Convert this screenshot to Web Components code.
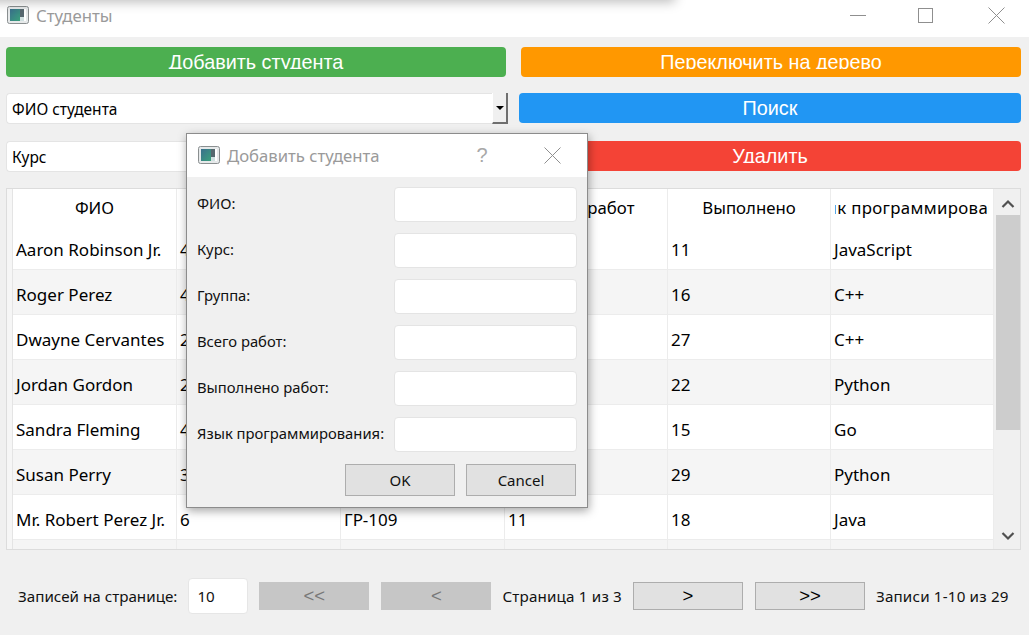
<!DOCTYPE html>
<html lang="ru">
<head>
<meta charset="utf-8">
<title>Студенты</title>
<style>
    html, body { margin: 0; padding: 0; height: 100%; overflow: hidden; }
    body { font-family: "Noto Sans", "Open Sans", sans-serif; background: #f0f0f0; }
</style>
</head>
<body>
<student-window></student-window>

<script>
const ICON = `
    <svg class="app-icon" width="22" height="18" viewBox="0 0 22 18">
        <defs>
            <linearGradient id="g" x1="0" y1="0" x2="1" y2="1">
                <stop offset="0" stop-color="#3a6f8c"/>
                <stop offset="1" stop-color="#3aa07c"/>
            </linearGradient>
        </defs>
        <rect x=".5" y=".5" width="21" height="17" rx="2" fill="#e6e9ea" stroke="#8a8f90"/>
        <rect x="3" y="3" width="10" height="12" fill="url(#g)"/>
        <rect x="13" y="3" width="4" height="8" fill="#56686f"/>
        <rect x="17" y="3" width="2" height="12" fill="#fff"/>
        <rect x="13" y="11" width="4" height="4" fill="#cfe0e0"/>
    </svg>`;

class TitleBar extends HTMLElement {
    constructor() {
        super();
        this.attachShadow({mode: "open"});
    }

    connectedCallback() {
        const dialog = this.hasAttribute("dialog");
        this.shadowRoot.innerHTML = `
            <style>
                :host {
                    display: flex;
                    align-items: center;
                    box-sizing: border-box;
                    background: #fff;
                    color: #9a9a9a;
                    font-size: var(--bar-font, 16.800px);
                    height: var(--bar-height, 37px);
                    padding-left: var(--bar-pad, 7px);
                    padding-bottom: var(--bar-bottom, 7px);
                }
                .app-icon { margin-right: 7px; flex: none; }
                .title { flex: 1; white-space: nowrap; }
                .ctl { display: flex; align-items: center; justify-content: center; flex: none; }
                svg.ctl-icon { stroke: #8f8f8f; fill: none; stroke-width: 1; }
            </style>
            ${ICON}
            <span class="title"><slot></slot></span>
            ${dialog ? `
                <span class="ctl" style="width:14px;margin-right:54px;font-size:20px;color:#a8a8a8;font-family:'Liberation Sans',sans-serif">?</span>
                <span class="ctl" style="width:18px;margin-right:26px"><svg class="ctl-icon" width="17" height="17"><path d="M.5 .5l16 16M16.5 .5l-16 16"/></svg></span>
            ` : `
                <span class="ctl" style="width:16px;margin-right:51px"><svg class="ctl-icon" width="16" height="16"><path d="M0 8.500h16"/></svg></span>
                <span class="ctl" style="width:16px;margin-right:55px"><svg class="ctl-icon" width="15" height="15"><rect x=".5" y=".5" width="14" height="14"/></svg></span>
                <span class="ctl" style="width:17px;margin-right:24px"><svg class="ctl-icon" width="17" height="17"><path d="M.5 .5l16 16M16.5 .5l-16 16"/></svg></span>
            `}
        `;
    }
}

class ActionButton extends HTMLElement {
    constructor() {
        super();
        this.attachShadow({mode: "open"}).innerHTML = `
            <style>
                :host {
                    display: block;
                    height: 30px;
                    border-radius: 4px;
                    background: var(--btn-color, #4caf50);
                    color: #fff;
                    font-family: "Liberation Sans", Arial, sans-serif;
                    font-size: 19.800px;
                    text-align: center;
                }
                /* the label is cut off under the baseline in the original */
                .clip {
                    display: block;
                    height: 22px;
                    line-height: 31px;
                    overflow: hidden;
                    white-space: nowrap;
                }
            </style>
            <span class="clip"><slot></slot></span>
        `;
    }
}

class ComboBox extends HTMLElement {
    constructor() {
        super();
        this.attachShadow({mode: "open"}).innerHTML = `
            <style>
                :host {
                    display: flex;
                    align-items: center;
                    height: 31px;
                    background: #fff;
                    border: 1px solid #e4e4e4;
                    border-right: 0;
                    border-radius: 4px 0 0 4px;
                    box-sizing: border-box;
                    font-size: 15.500px;
                    color: #000;
                    padding-left: 5px;
                }
                .text { flex: 1; }
                .arrow {
                    width: 16px;
                    height: 31px;
                    box-sizing: border-box;
                    background: #f0f0f0;
                    border-right: 2px solid #6f6f6f;
                    border-bottom: 2px solid #6f6f6f;
                    border-left: 1px solid #fff;
                    display: flex;
                    align-items: center;
                    justify-content: center;
                }
                .arrow i {
                    border: 4px solid transparent;
                    border-top: 4px solid #000;
                    border-bottom: 0;
                }
            </style>
            <span class="text"><slot></slot></span>
            <span class="arrow"><i></i></span>
        `;
    }
}

class StudentTable extends HTMLElement {
    constructor() {
        super();
        this.attachShadow({mode: "open"});
    }

    set rows(rows) {
        this._rows = rows;
        this.render();
    }

    render() {
        const heads = ["ФИО", "Курс", "Группа", "Всего работ", "Выполнено", "Язык программирования"];
        this.shadowRoot.innerHTML = `
            <style>
                :host {
                    display: flex;
                    height: 362px;
                    box-sizing: border-box;
                    border: 1px solid #dcdcdc;
                    background: #fff;
                    color: #000;
                    overflow: hidden;
                }
                .vhead { width: 5px; flex: none; background: #f6f6f6; border-right: 1px solid #e4e4e4; }
                .grid { flex: 1; min-width: 0; overflow: hidden; }
                .row { display: grid; grid-template-columns: 164px 164px 164px 163px 163px 163px; height: 45px; box-sizing: border-box; }
                .row.head { height: 39px; }
                .row.first { height: 42px; }
                .row.first .cell { padding-top: 2px; }
                .row.alt { background: #f5f5f5; }
                .cell {
                    display: flex;
                    align-items: center;
                    padding: 4px 0 0 3px;
                    font-size: 17px;
                    white-space: nowrap;
                    overflow: hidden;
                    border-right: 1px solid #ececec;
                    border-bottom: 1px solid #ececec;
                    box-sizing: border-box;
                }
                .head .cell {
                    font-size: 16.800px;
                    padding: 0 4px 2px;
                    border-bottom: 0;
                }
                /* long headings stay centred and get cut on both sides */
                .lbl { flex: 1; min-width: 0; display: flex; justify-content: center; overflow: hidden; }
                .lbl span { flex: none; }
                .head .cell:last-child span { letter-spacing: .35px; }
                .bar {
                    width: 26px;
                    flex: none;
                    background: #f0f0f0;
                    display: flex;
                    flex-direction: column;
                    align-items: center;
                    padding-left: 1px;
                    box-sizing: border-box;
                }
                .bar svg { flex: none; }
                .thumb { width: 24px; height: 215px; background: #cdcdcd; flex: none; }
                .gap { flex: 1; }
            </style>
            <div class="vhead"></div>
            <div class="grid">
                <div class="row head">${heads.map(h => `<div class="cell"><div class="lbl"><span>${h}</span></div></div>`).join("")}</div>
                ${this._rows.map((r, i) => `
                    <div class="row ${i === 0 ? "first" : ""} ${i % 2 ? "alt" : ""}">
                        ${r.map(c => `<div class="cell">${c}</div>`).join("")}
                    </div>`).join("")}
            </div>
            <div class="bar">
                <svg width="14" height="26" viewBox="0 0 14 26"><path d="M1.500 18l5.500-5.500 5.500 5.500" fill="none" stroke="#505050" stroke-width="2.200"/></svg>
                <div class="thumb"></div>
                <div class="gap"></div>
                <svg width="14" height="28" viewBox="0 0 14 28"><path d="M1.500 12l5.500 5.500 5.500-5.500" fill="none" stroke="#505050" stroke-width="2.200"/></svg>
            </div>
        `;
    }
}

class PagerBar extends HTMLElement {
    constructor() {
        super();
        this.attachShadow({mode: "open"}).innerHTML = `
            <style>
                :host {
                    display: flex;
                    align-items: center;
                    gap: 11px;
                    padding-left: 18px;
                    font-size: 15.200px;
                    color: #111;
                    white-space: nowrap;
                }
                .wide { letter-spacing: .17px; }
                .size {
                    width: 60px;
                    height: 36px;
                    box-sizing: border-box;
                    background: #fff;
                    border: 1px solid #e6e6e6;
                    border-radius: 4px;
                    padding-left: 8px;
                    display: flex;
                    align-items: center;
                }
                .nav {
                    width: 110px;
                    height: 28px;
                    box-sizing: border-box;
                    border: 1px solid #adadad;
                    background: #e1e1e1;
                    color: #000;
                    display: flex;
                    align-items: center;
                    justify-content: center;
                    font-family: "Liberation Sans", Arial, sans-serif;
                    font-size: 18.500px;
                }
                .nav.off { background: #c6c6c6; border-color: #c6c6c6; color: #787878; }
            </style>
            <span>Записей на странице:</span>
            <span class="size">10</span>
            <span class="nav off">&lt;&lt;</span>
            <span class="nav off" style="margin-left:1px">&lt;</span>
            <span class="wide">Страница 1 из 3</span>
            <span class="nav">&gt;</span>
            <span class="nav" style="margin-left:1px">&gt;&gt;</span>
            <span class="wide">Записи 1-10 из 29</span>
        `;
    }
}

class FormRow extends HTMLElement {
    constructor() {
        super();
        this.attachShadow({mode: "open"}).innerHTML = `
            <style>
                :host {
                    display: grid;
                    grid-template-columns: 197px 183px;
                    align-items: center;
                    height: 35px;
                    font-size: 14.800px;
                    color: #111;
                }
                .label { padding-bottom: 4px; }
                .field {
                    height: 35px;
                    box-sizing: border-box;
                    background: #fff;
                    border: 1px solid #e4e4e4;
                    border-radius: 4px;
                }
            </style>
            <span class="label"><slot></slot></span>
            <span class="field"></span>
        `;
    }
}

class AddDialog extends HTMLElement {
    constructor() {
        super();
        this.attachShadow({mode: "open"}).innerHTML = `
            <style>
                :host {
                    display: block;
                    position: absolute;
                    left: 186px;
                    top: 133px;
                    width: 402px;
                    height: 375px;
                    box-sizing: border-box;
                    background: #f0f0f0;
                    border: 1px solid #8c8c8c;
                    box-shadow: 1px 3px 9px rgba(0, 0, 0, .35);
                }
                title-bar { --bar-height: 43px; --bar-pad: 11px; --bar-bottom: 1px; --bar-font: 16.700px; }
                .form {
                    display: flex;
                    flex-direction: column;
                    gap: 11px;
                    padding: 10px 10px 0 10px;
                }
                .buttons {
                    display: flex;
                    justify-content: flex-end;
                    gap: 11px;
                    margin-top: 1px;
                    padding-right: 1px;
                }
                .buttons span {
                    width: 110px;
                    height: 32px;
                    box-sizing: border-box;
                    border: 1px solid #adadad;
                    background: #e1e1e1;
                    font-size: 15px;
                    color: #111;
                    display: flex;
                    align-items: center;
                    justify-content: center;
                }
            </style>
            <title-bar dialog>Добавить студента</title-bar>
            <div class="form">
                <form-row>ФИО:</form-row>
                <form-row>Курс:</form-row>
                <form-row>Группа:</form-row>
                <form-row>Всего работ:</form-row>
                <form-row>Выполнено работ:</form-row>
                <form-row>Язык программирования:</form-row>
                <div class="buttons"><span>OK</span><span>Cancel</span></div>
            </div>
        `;
    }
}

class StudentWindow extends HTMLElement {
    constructor() {
        super();
        this.attachShadow({mode: "open"}).innerHTML = `
            <style>
                :host {
                    display: block;
                    position: relative;
                    width: 1029px;
                    height: 635px;
                    overflow: hidden;
                    background: #f0f0f0;
                }
                /* edge of another window's shadow at the very top */
                .other-shadow {
                    position: absolute;
                    left: -20px;
                    top: -16px;
                    width: 695px;
                    height: 16px;
                    box-shadow: 0 2px 12px rgba(0, 0, 0, .27);
                }
                .controls {
                    display: grid;
                    grid-template-columns: 500px 500px;
                    column-gap: 15px;
                    row-gap: 17px;
                    padding: 10px 8px 0 6px;
                }
                .top-row { margin-bottom: -1px; }
                .wide-left { width: 502px; }
                .search { margin-left: -2px; width: 502px; }
                student-table { margin: 16px 8px 0 6px; }
                pager-bar { margin-top: 28px; }
            </style>
            <title-bar>Студенты</title-bar>
            <div class="other-shadow"></div>
            <div class="controls">
                <action-button class="top-row" style="--btn-color:#4caf50">Добавить студента</action-button>
                <action-button class="top-row" style="--btn-color:#ff9800">Переключить на дерево</action-button>
                <combo-box class="wide-left">ФИО студента</combo-box>
                <action-button class="search" style="--btn-color:#2196f3">Поиск</action-button>
                <combo-box class="wide-left">Курс</combo-box>
                <action-button class="search" style="--btn-color:#f44336">Удалить</action-button>
            </div>
            <student-table></student-table>
            <pager-bar></pager-bar>
            <add-dialog></add-dialog>
        `;
    }

    connectedCallback() {
        this.shadowRoot.querySelector("student-table").rows = [
            ["Aaron Robinson Jr.", "4", "", "", "11", "JavaScript"],
            ["Roger Perez", "4", "", "", "16", "C++"],
            ["Dwayne Cervantes", "2", "", "", "27", "C++"],
            ["Jordan Gordon", "2", "", "", "22", "Python"],
            ["Sandra Fleming", "4", "", "", "15", "Go"],
            ["Susan Perry", "3", "", "", "29", "Python"],
            ["Mr. Robert Perez Jr.", "6", "ГР-109", "11", "18", "Java"],
            ["", "", "", "", "", ""],
        ];
    }
}

customElements.define("title-bar", TitleBar);
customElements.define("action-button", ActionButton);
customElements.define("combo-box", ComboBox);
customElements.define("student-table", StudentTable);
customElements.define("pager-bar", PagerBar);
customElements.define("form-row", FormRow);
customElements.define("add-dialog", AddDialog);
customElements.define("student-window", StudentWindow);
</script>
</body>
</html>
